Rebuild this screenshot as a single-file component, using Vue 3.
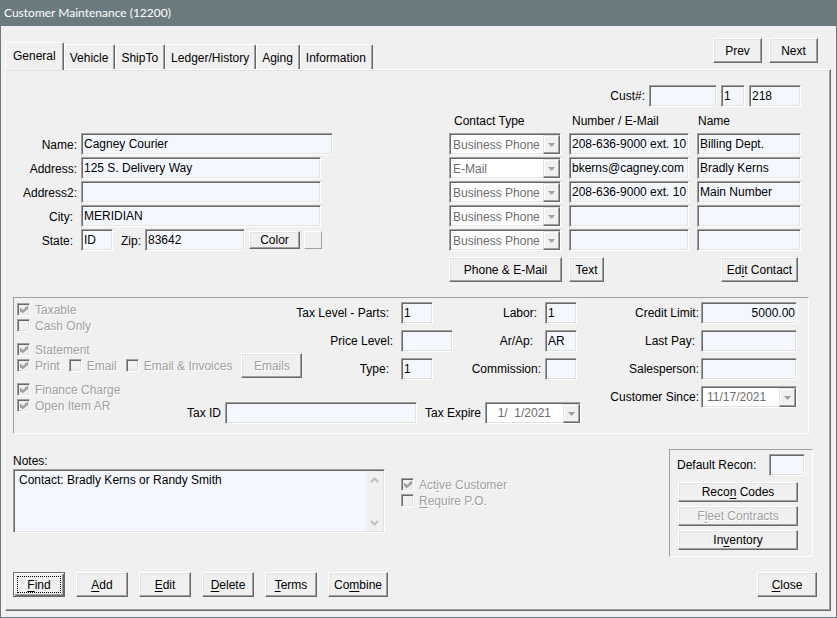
<script setup>
import { ref, reactive } from 'vue'

const tabs = ['General', 'Vehicle', 'ShipTo', 'Ledger/History', 'Aging', 'Information']
const activeTab = ref('General')

const customer = reactive({
  prefix: '', store: '1', number: '218',
  name: 'Cagney Courier', address: '125 S. Delivery Way', address2: '',
  city: 'MERIDIAN', state: 'ID', zip: '83642',
  taxParts: '1', taxLabor: '1', priceLevel: '', arAp: 'AR', type: '1', commission: '',
  creditLimit: '5000.00', lastPay: '', salesperson: '', taxId: '', recon: '',
  notes: 'Contact: Bradly Kerns or Randy Smith',
})

const contacts = reactive([
  { type: 'Business Phone', value: '208-636-9000 ext. 10', name: 'Billing Dept.' },
  { type: 'E-Mail', value: 'bkerns@cagney.com', name: 'Bradly Kerns' },
  { type: 'Business Phone', value: '208-636-9000 ext. 10', name: 'Main Number' },
  { type: 'Business Phone', value: '', name: '' },
  { type: 'Business Phone', value: '', name: '' },
])

// Each caption is split around its accelerator letter.
const actions = [
  ['', 'F', 'ind'],
  ['', 'A', 'dd'],
  ['', 'E', 'dit'],
  ['', 'D', 'elete'],
  ['', 'T', 'erms'],
  ['Co', 'm', 'bine'],
]
</script>

<template>
  <div class="window">
    <header class="titlebar">Customer Maintenance (12200)</header>
    <main class="client">
      <div class="top">
        <div class="tabs" role="tablist">
          <button
            v-for="tab in tabs" :key="tab" type="button" role="tab" class="tab"
            :class="{ active: tab === activeTab }" :aria-selected="tab === activeTab"
            @click="activeTab = tab"
          >{{ tab }}</button>
        </div>
        <div class="pager">
          <button type="button" class="btn pager-btn">Prev</button>
          <button type="button" class="btn pager-btn">Next</button>
        </div>
      </div>

      <div class="panel">
        <section class="identity">
          <div class="address">
            <label for="name">Name:</label>
            <input id="name" v-model="customer.name" class="field w-name">
            <label for="address">Address:</label>
            <input id="address" v-model="customer.address" class="field w-address">
            <label for="address2">Address2:</label>
            <input id="address2" v-model="customer.address2" class="field w-address">
            <label for="city" class="inset">City:</label>
            <input id="city" v-model="customer.city" class="field w-address">
            <label for="state" class="inset">State:</label>
            <div class="state-row">
              <input id="state" v-model="customer.state" class="field w-code">
              <label for="zip" class="zip">Zip:</label>
              <input id="zip" v-model="customer.zip" class="field w-zip">
              <button type="button" class="btn color">Color</button>
              <span class="swatch"></span>
            </div>
          </div>

          <div class="contacts">
            <div class="cust">
              <label for="prefix">Cust#:</label>
              <input id="prefix" v-model="customer.prefix" class="field w-prefix">
              <input v-model="customer.store" class="field w-store" aria-label="Store">
              <input v-model="customer.number" class="field w-number" aria-label="Customer number">
            </div>
            <div class="contact-row heads">
              <span>Contact Type</span><span>Number / E-Mail</span><span>Name</span>
            </div>
            <div v-for="(c, i) in contacts" :key="i" class="contact-row">
              <div class="combo">
                <select v-model="c.type" disabled aria-label="Contact Type">
                  <option>Business Phone</option>
                  <option>E-Mail</option>
                </select>
                <span class="drop"><svg width="7" height="4" viewBox="0 0 7 4"><path d="M0 0h7L3.5 4z" /></svg></span>
              </div>
              <input v-model="c.value" class="field" aria-label="Number / E-Mail">
              <input v-model="c.name" class="field" aria-label="Name">
            </div>
            <div class="contact-row contact-actions">
              <button type="button" class="btn phone">Phone &amp; E-Mail</button>
              <button type="button" class="btn text">Text</button>
              <button type="button" class="btn edit-contact">Ed<u>i</u>t Contact</button>
            </div>
          </div>
        </section>

        <section class="group account">
          <div class="account-main">
            <div class="account-upper">
              <div class="checks">
                <label class="check"><input type="checkbox" checked disabled>Taxable</label>
                <label class="check spaced"><input type="checkbox" disabled>Cash Only</label>
                <label class="check"><input type="checkbox" checked disabled>Statement</label>
                <div class="check-row">
                  <label class="check"><input type="checkbox" checked disabled>Print</label>
                  <label class="check"><input type="checkbox" disabled>Email</label>
                  <label class="check"><input type="checkbox" disabled>Email &amp; Invoices</label>
                  <button type="button" class="btn emails" disabled>Emails</button>
                </div>
              </div>
              <div class="levels">
                <label for="tax-parts" class="inset-2">Tax Level - Parts:</label>
                <input id="tax-parts" v-model="customer.taxParts" class="field w-code">
                <label for="tax-labor" class="inset">Labor:</label>
                <input id="tax-labor" v-model="customer.taxLabor" class="field w-code">
                <label for="price" class="inset">Price Level:</label>
                <input id="price" v-model="customer.priceLevel" class="field">
                <label for="arap" class="inset-2">Ar/Ap:</label>
                <input id="arap" v-model="customer.arAp" class="field w-code">
                <label for="type" class="inset-2">Type:</label>
                <input id="type" v-model="customer.type" class="field w-code">
                <label for="commission">Commission:</label>
                <input id="commission" v-model="customer.commission" class="field w-code">
              </div>
            </div>
            <div class="account-lower">
              <div class="checks">
                <label class="check"><input type="checkbox" checked disabled>Finance Charge</label>
                <label class="check"><input type="checkbox" checked disabled>Open Item AR</label>
              </div>
              <div class="tax">
                <label for="tax-id">Tax ID</label>
                <input id="tax-id" v-model="customer.taxId" class="field w-tax">
                <label for="tax-expire" class="expire">Tax Expire</label>
                <div class="combo date">
                  <select id="tax-expire" disabled><option>&nbsp;&nbsp;1/&nbsp;&nbsp;1/2021</option></select>
                  <span class="drop"><svg width="7" height="4" viewBox="0 0 7 4"><path d="M0 0h7L3.5 4z" /></svg></span>
                </div>
              </div>
            </div>
          </div>
          <div class="credit">
            <label for="credit">Credit Limit:</label>
            <input id="credit" v-model="customer.creditLimit" class="field amount">
            <label for="last-pay" class="inset">Last Pay:</label>
            <input id="last-pay" v-model="customer.lastPay" class="field">
            <label for="salesperson">Salesperson:</label>
            <input id="salesperson" v-model="customer.salesperson" class="field">
            <label for="since">Customer Since:</label>
            <div class="combo date">
              <select id="since" disabled><option>11/17/2021</option></select>
              <span class="drop"><svg width="7" height="4" viewBox="0 0 7 4"><path d="M0 0h7L3.5 4z" /></svg></span>
            </div>
          </div>
        </section>

        <section class="extras">
          <div class="notes">
            <label for="notes">Notes:</label>
            <div class="memo">
              <textarea id="notes" v-model="customer.notes"></textarea>
              <div class="scroller" aria-hidden="true">
                <svg width="9" height="6" viewBox="0 0 9 6"><path d="M1 5l3.500-3.500L8 5" /></svg>
                <svg width="9" height="6" viewBox="0 0 9 6"><path d="M1 1l3.500 3.500L8 1" /></svg>
              </div>
            </div>
          </div>
          <div class="checks flags">
            <label class="check"><input type="checkbox" checked disabled><span>Act<u>i</u>ve Customer</span></label>
            <label class="check"><input type="checkbox" disabled><span><u>R</u>equire P.O.</span></label>
          </div>
          <div class="group recon">
            <div class="recon-row">
              <label for="recon">Default Recon:</label>
              <input id="recon" v-model="customer.recon" class="field w-recon">
            </div>
            <button type="button" class="btn flat"><span>Reco<u>n</u> Codes</span></button>
            <button type="button" class="btn flat" disabled><span>F<u>l</u>eet Contracts</span></button>
            <button type="button" class="btn flat"><span>In<u>v</u>entory</span></button>
          </div>
        </section>

        <footer class="actions">
          <button
            v-for="(a, i) in actions" :key="a.join('')" type="button" class="btn action"
            :class="{ default: i === 0, wide: a.join('').length > 6 }"
          ><span>{{ a[0] }}<u>{{ a[1] }}</u>{{ a[2] }}</span></button>
          <button type="button" class="btn action wide close"><span><u>C</u>lose</span></button>
        </footer>
      </div>
    </main>
  </div>
</template>

<style>
body { margin: 0; background: #f0f0f0; }
</style>

<style scoped>
.window {
  box-sizing: border-box;
  min-width: 837px;
  border: 1px solid #6b7a7e;
  background: #f0f0f0;
  color: #000;
  font: 12px/16px "Liberation Sans", Arial, sans-serif;
}
.window *, .window *::before, .window *::after { box-sizing: border-box; }
button, input, select, textarea { font: inherit; color: inherit; margin: 0; border-radius: 0; }
label { white-space: nowrap; }
u { text-underline-offset: 2px; }

.titlebar {
  height: 25px;
  padding-left: 3px;
  background: #6b7a7e;
  color: #fff;
  font: 12px/24px Lato, "Open Sans", sans-serif;
}
.client { padding: 0 5px 6px 4px; }

.top { display: flex; justify-content: space-between; align-items: flex-end; height: 43px; }
.tabs { display: flex; align-items: flex-end; }
.tab {
  height: 25px;
  padding: 2px 6px 0 5px;
  border: 1px solid #fff;
  border-right: 1px solid #696969;
  border-bottom: 0;
  border-radius: 2px 2px 0 0;
  box-shadow: inset -1px 0 #a0a0a0;
  background: #f0f0f0;
}
.tab.active {
  position: relative;
  height: 28px;
  margin-bottom: -1px;
  padding: 0 7px 1px;
}
.pager { display: flex; gap: 7px; padding: 0 13px 6px 0; }

.btn {
  height: 25px;
  padding: 0;
  border: 1px solid;
  border-color: #fff #696969 #696969 #fff;
  box-shadow: inset -1px -1px #a0a0a0, inset 1px 1px #e3e3e3;
  background: #f0f0f0;
  line-height: 16px;
  text-align: center;
  white-space: nowrap;
}
.btn:disabled { color: #a0a0a0; text-shadow: 1px 1px #fff; }
.pager-btn { width: 49px; }

.panel {
  padding: 15px 13px 13px 7px;
  border: 1px solid;
  border-color: #fff #696969 #696969 #fff;
  box-shadow: inset -1px -1px #a0a0a0, inset 1px 1px #e3e3e3;
}

.field {
  width: 100%;
  height: 22px;
  padding: 0 1px 1px 2px;
  border: 1px solid;
  border-color: #a0a0a0 #fff #fff #a0a0a0;
  box-shadow: inset 1px 1px #696969, inset -1px -1px #e3e3e3;
  background: #f4f8fe;
  outline: 0;
}
.field.w-name { width: 252px; }
.field.w-address { width: 240px; }
.field.w-code { width: 32px; }
.field.w-zip { width: 100px; }
.field.w-prefix { width: 68px; }
.field.w-store { width: 24px; }
.field.w-number { width: 52px; }
.field.w-tax { width: 192px; }
.field.w-recon { width: 36px; }
.field.amount { text-align: right; }

.identity { display: flex; justify-content: space-between; padding-right: 16px; }
.address {
  display: grid;
  grid-template-columns: 64px auto;
  grid-auto-rows: 22px;
  align-content: start;
  align-items: center;
  gap: 2px 4px;
  padding-top: 48px;
}
.address > label { padding-top: 1px; }
.address > label, .levels > label, .credit > label {
  display: flex;
  justify-content: flex-end;
}
.address > .inset, .levels > .inset, .credit > .inset { padding-right: 4px; }
.levels > .inset-2 { padding-right: 8px; }
.state-row { display: flex; align-items: center; gap: 4px; }
.zip { padding: 1px 0 0 4px; }
.btn.color { width: 51px; height: 18px; line-height: 14px; }
.swatch { width: 18px; height: 18px; border: 1px solid; border-color: #fff #a0a0a0 #a0a0a0 #fff; }

.contacts { display: flex; flex-direction: column; gap: 2px; width: 352px; }
.cust { display: flex; justify-content: flex-end; align-items: center; gap: 4px; }
.contact-row { display: grid; grid-template-columns: 112px 120px 104px; gap: 8px; }
.heads { height: 22px; align-items: center; padding-top: 2px; }
.heads span:first-child { padding-left: 5px; }
.heads span:nth-child(2) { padding-left: 3px; }
.heads span:last-child { padding-left: 1px; }
.contact-actions { padding-top: 4px; }
.phone { width: 113px; }
.text { width: 35px; }
.edit-contact { width: 77px; justify-self: end; margin-right: 3px; }

.combo {
  position: relative;
  width: 100%;
  height: 22px;
  border: 1px solid;
  border-color: #a0a0a0 #fff #fff #a0a0a0;
  box-shadow: inset 1px 1px #696969, inset -1px -1px #e3e3e3;
  background: #fff;
}
.combo select {
  display: block;
  width: 100%;
  height: 20px;
  padding: 1px 17px 0 3px;
  border: 0;
  appearance: none;
  background: transparent;
  color: #6d6d6d;
  opacity: 1;
}
.combo.date { width: 96px; }
.combo.date select { padding: 0 17px 0 5px; }
.drop {
  position: absolute;
  top: 1px;
  right: 0;
  display: flex;
  align-items: center;
  justify-content: center;
  width: 17px;
  height: 19px;
  border: 1px solid;
  border-color: #e3e3e3 #696969 #696969 #e3e3e3;
  box-shadow: inset -1px -1px #a0a0a0, inset 1px 1px #fff;
  background: #f0f0f0;
  pointer-events: none;
}
.drop path { fill: #a0a0a0; }

.group { border: 1px solid; border-color: #a0a0a0 #fff #fff #a0a0a0; }
.account {
  display: flex;
  justify-content: space-between;
  margin: 15px 8px 0 0;
  padding: 4px 11px 9px 3px;
}
.account-main { display: flex; flex-direction: column; gap: 2px; width: 564px; }
.account-upper { display: flex; justify-content: space-between; padding-right: 4px; }
.account-lower { display: flex; justify-content: space-between; }
.levels {
  display: grid;
  grid-template-columns: 94px 52px 84px 32px;
  align-items: center;
  gap: 6px 4px;
}
.credit {
  display: grid;
  grid-template-columns: auto 96px;
  align-items: center;
  align-content: start;
  gap: 6px 2px;
}
.tax { display: flex; align-items: center; gap: 4px; padding-top: 20px; }
.tax .expire { padding-left: 4px; }

.checks { display: flex; flex-direction: column; }
.check {
  display: flex;
  align-items: center;
  gap: 5px;
  height: 16px;
  padding-bottom: 1px;
  color: #a0a0a0;
  text-shadow: 1px 1px #fff;
}
.check.spaced { margin-bottom: 8px; }
.check-row { display: flex; align-items: flex-start; height: 16px; gap: 9px; }
.check input {
  appearance: none;
  flex: none;
  width: 13px;
  height: 13px;
  border: 1px solid;
  border-color: #a0a0a0 #fff #fff #a0a0a0;
  box-shadow: inset 1px 1px #696969, inset -1px -1px #e3e3e3;
  background: #f0f0f0;
}
.check input:checked::after {
  content: "";
  display: block;
  width: 8px;
  height: 8px;
  margin: 2px;
  background: #a0a0a0;
  clip-path: polygon(0 2px, 1px 2px, 3px 4px, 7px 0, 8px 0, 8px 3px, 3px 7px, 2px 7px, 0 5px);
}
.emails { width: 61px; flex: none; margin-top: -5px; }

.extras { display: flex; align-items: flex-start; padding: 15px 4px 0 0; }
.notes { display: flex; flex-direction: column; width: 372px; padding-top: 4px; }
.memo {
  display: flex;
  height: 64px;
  padding: 1px;
  border: 1px solid;
  border-color: #a0a0a0 #fff #fff #a0a0a0;
  box-shadow: inset 1px 1px #696969, inset -1px -1px #e3e3e3;
}
.memo textarea {
  flex: 1;
  min-width: 0;
  padding: 2px 4px;
  border: 0;
  outline: 0;
  resize: none;
  overflow: hidden;
  background: #f4f8fe;
  line-height: 14px;
}
.scroller {
  display: flex;
  flex-direction: column;
  align-items: center;
  justify-content: space-between;
  width: 17px;
  padding: 6px 0 5px;
}
.scroller path { fill: none; stroke: #bfbfbf; stroke-width: 2; }
.flags { padding: 28px 0 0 16px; }
.recon {
  display: flex;
  flex-direction: column;
  gap: 4px;
  width: 144px;
  margin-left: auto;
  padding: 4px 7px 6px;
}
.recon-row { display: flex; align-items: center; justify-content: space-between; padding-bottom: 2px; }
.btn.flat { width: 120px; height: 20px; margin-left: 1px; }

.actions { display: flex; gap: 11px; padding-top: 15px; }
.action { width: 52px; }
.action.wide { width: 60px; }
.action.default {
  padding: 2px;
  border-color: #696969;
  box-shadow: inset 1px 1px #fff, inset -1px -1px #696969, inset -2px -2px #a0a0a0;
}
.action.default span { display: block; height: 17px; margin: 0 1px; outline: 1px dotted #000; outline-offset: -1px; line-height: 18px; }
.close { margin-left: auto; }
</style>
